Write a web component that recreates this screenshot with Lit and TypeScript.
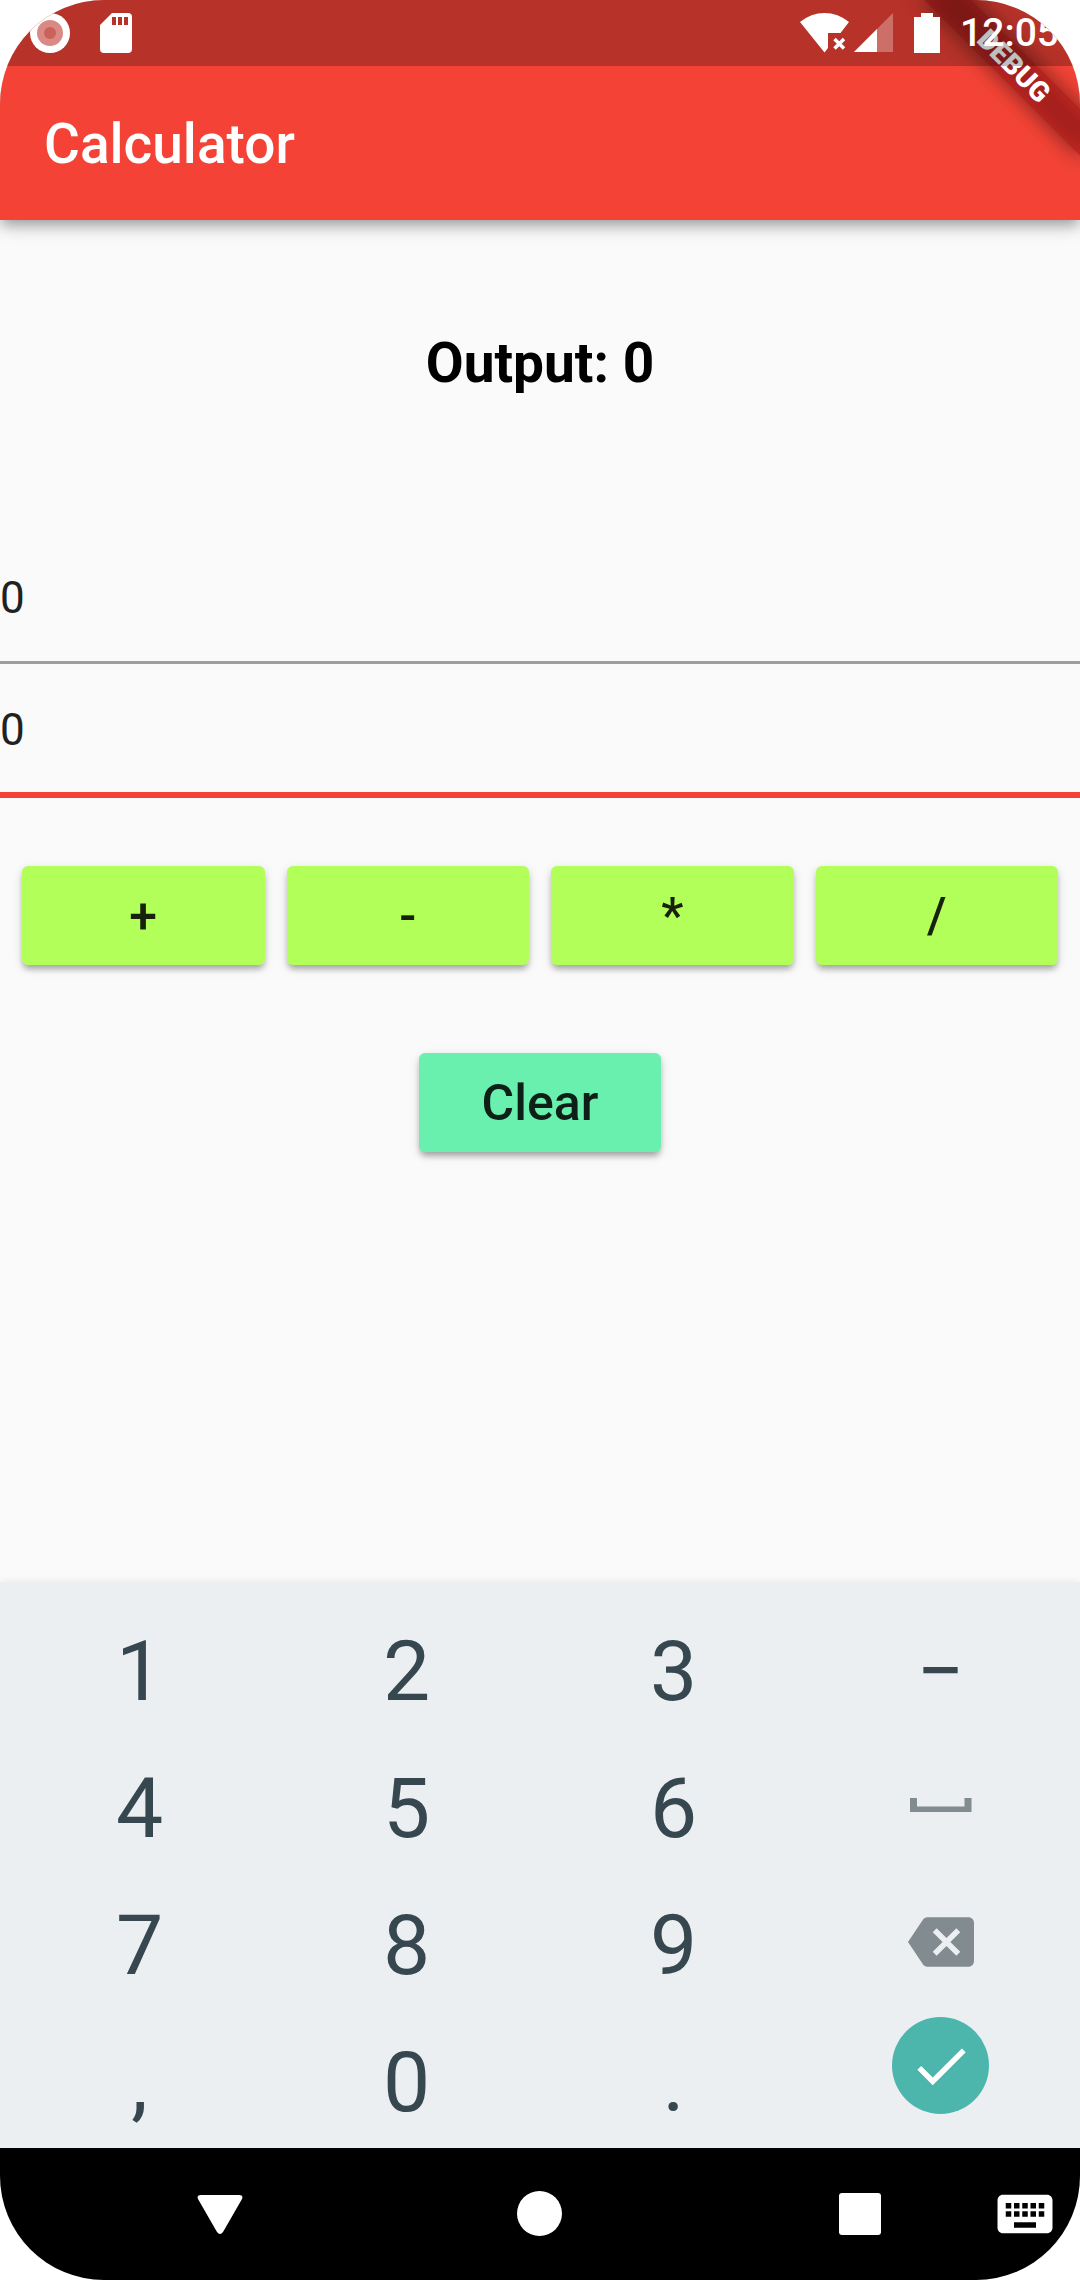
import { LitElement, html, css } from "lit";
import { classMap } from "lit/directives/class-map.js";

type Field = "first" | "second";

const DIGIT_ROWS = [
  ["1", "2", "3"],
  ["4", "5", "6"],
  ["7", "8", "9"],
  [",", "0", "."],
];

const OPERATORS = ["+", "-", "*", "/"];

class StatusBar extends LitElement {
  static styles = css`
    :host {
      display: block;
    }
    .bar {
      display: flex;
      align-items: center;
      justify-content: space-between;
      height: 66px;
      padding: 0 21px 0 30px;
      box-sizing: border-box;
      background: rgba(0, 0, 0, 0.25);
      color: #fff;
    }
    .notices {
      display: flex;
      gap: 30px;
    }
    .system {
      display: flex;
      align-items: center;
      gap: 20px;
    }
    .radios {
      display: flex;
      gap: 5px;
    }
    .clock {
      font-size: 39px;
      font-weight: 500;
      line-height: 66px;
    }
    svg {
      display: block;
      fill: #fff;
    }
  `;

  render() {
    return html`
      <div class="bar">
        <div class="notices">
          <svg width="40" height="40" viewBox="0 0 40 40" aria-hidden="true">
            <circle cx="20" cy="20" r="20" />
            <circle cx="20" cy="20" r="13" fill="#d98a84" />
            <circle cx="20" cy="20" r="6" fill="#cb6259" />
          </svg>
          <svg width="32" height="40" viewBox="0 0 32 40" aria-hidden="true">
            <path
              fill-rule="evenodd"
              d="M12 0H28Q32 0 32 4V36Q32 40 28 40H4Q0 40 0 36V12ZM12 4V12H16V4ZM18 4V12H22V4ZM24 4V12H28V4Z"
            />
          </svg>
        </div>
        <div class="system">
          <div class="radios">
            <svg width="49" height="40" viewBox="0 0 49 40" aria-hidden="true">
              <path d="M0 9Q11 0 24.500 0T49 9L40.500 20H28V35L24.500 39.500Z" />
              <path d="M34.500 26L44 35.500M44 26L34.500 35.500" stroke="#fff" stroke-width="3.500" />
            </svg>
            <svg width="39" height="40" viewBox="0 0 39 40" aria-hidden="true">
              <path d="M39 0V39H0Z" opacity="0.3" />
              <path d="M23 16V39H0Z" />
            </svg>
          </div>
          <svg width="27" height="40" viewBox="0 0 27 40" aria-hidden="true">
            <path d="M8 0H20V4H27V40H1V4H8Z" />
          </svg>
          <span class="clock">12:05</span>
        </div>
      </div>
    `;
  }
}
customElements.define("status-bar", StatusBar);

class NavBar extends LitElement {
  static styles = css`
    :host {
      display: block;
    }
    .bar {
      display: flex;
      align-items: center;
      height: 132px;
      padding: 0 11px 0 176px;
      box-sizing: border-box;
      background: #000;
    }
    .main {
      display: flex;
      flex: 1;
      justify-content: space-between;
      margin-right: 77px;
    }
    button {
      display: grid;
      place-items: center;
      width: 88px;
      height: 88px;
      padding: 0;
      border: 0;
      background: none;
    }
    svg {
      display: block;
      fill: #fff;
    }
  `;

  render() {
    return html`
      <nav class="bar">
        <div class="main">
          <button aria-label="Back">
            <svg width="46" height="46" viewBox="0 0 46 46">
              <path d="M4 4H42Q46.500 4 45 8L26 41Q23 45 20 41L1 8Q-.5 4 4 4Z" />
            </svg>
          </button>
          <button aria-label="Home">
            <svg width="46" height="46" viewBox="0 0 46 46">
              <circle cx="22.500" cy="22.500" r="22.500" />
            </svg>
          </button>
          <button aria-label="Recent apps">
            <svg width="46" height="46" viewBox="0 0 46 46">
              <rect x="2" y="2" width="42" height="42" rx="3" />
            </svg>
          </button>
        </div>
        <button aria-label="Switch keyboard">
          <svg width="66" height="66" viewBox="0 0 24 24">
            <path
              d="M20 5H4c-1.100 0-1.990.9-1.990 2L2 17c0 1.100.9 2 2 2h16c1.100 0 2-.9 2-2V7c0-1.100-.9-2-2-2zm-9 3h2v2h-2V8zm0 3h2v2h-2v-2zM8 8h2v2H8V8zm0 3h2v2H8v-2zm-1 2H5v-2h2v2zm0-3H5V8h2v2zm9 7H8v-2h8v2zm0-4h-2v-2h2v2zm0-3h-2V8h2v2zm3 3h-2v-2h2v2zm0-3h-2V8h2v2z"
            />
          </svg>
        </button>
      </nav>
    `;
  }
}
customElements.define("nav-bar", NavBar);

class NumberPad extends LitElement {
  static styles = css`
    :host {
      display: block;
    }
    .pad {
      display: grid;
      grid-template-columns: repeat(4, 1fr);
      grid-auto-rows: 131px;
      row-gap: 6px;
      padding: 24px 6px 0;
      background: #ebeff2;
      box-shadow: 0 0 8px rgba(0, 0, 0, 0.08);
    }
    .key {
      display: flex;
      align-items: center;
      justify-content: center;
      padding: 0;
      border: 0;
      background: none;
      color: #37474f;
      font: 400 84px/99px Roboto, "Liberation Sans", sans-serif;
    }
    .symbol {
      padding-bottom: 8px;
    }
    .enter {
      align-items: flex-start;
    }
    .disc {
      display: grid;
      place-items: center;
      width: 97px;
      height: 97px;
      border-radius: 50%;
      background: #4db6ac;
    }
    svg {
      display: block;
      fill: #828c90;
    }
    .disc svg {
      fill: #fff;
    }
  `;

  private press(key: string) {
    this.dispatchEvent(new CustomEvent("key", { detail: key }));
  }

  private action(row: number) {
    switch (row) {
      case 0:
        return html`<button class="key" @click=${() => this.press("-")}>−</button>`;
      case 1:
        return html`<button class="key symbol" aria-label="Space">
          <svg width="66" height="66" viewBox="0 0 66 66">
            <path d="M2 26H9V34.500H56.500V26H63.500V40H2Z" />
          </svg>
        </button>`;
      case 2:
        return html`<button class="key symbol" aria-label="Delete" @click=${() => this.press("delete")}>
          <svg width="66" height="66" viewBox="0 0 24 24">
            <path
              d="M22 3H7c-.69 0-1.230.35-1.590.88L0 12l5.410 8.110c.36.53.9.89 1.590.89h15c1.100 0 2-.9 2-2V5c0-1.100-.9-2-2-2zm-3 12.590L17.590 17 14 13.410 10.410 17 9 15.590 12.590 12 9 8.410 10.410 7 14 10.590 17.590 7 19 8.410 15.410 12 19 15.590z"
            />
          </svg>
        </button>`;
      default:
        return html`<button class="key enter" aria-label="Done">
          <span class="disc">
            <svg width="66" height="66" viewBox="0 0 24 24">
              <path d="M9 16.200L4.800 12l-1.400 1.400L9 19 21 7l-1.400-1.400L9 16.200z" />
            </svg>
          </span>
        </button>`;
    }
  }

  render() {
    return html`
      <div class="pad">
        ${DIGIT_ROWS.map(
          (row, i) => html`
            ${row.map((k) => html`<button class="key" @click=${() => this.press(k)}>${k}</button>`)}
            ${this.action(i)}
          `
        )}
      </div>
    `;
  }
}
customElements.define("number-pad", NumberPad);

class AppRoot extends LitElement {
  static properties = {
    first: { state: true },
    second: { state: true },
    output: { state: true },
    active: { state: true },
  };

  declare first: string;
  declare second: string;
  declare output: number;
  declare active: Field;

  constructor() {
    super();
    this.first = "0";
    this.second = "0";
    this.output = 0;
    this.active = "second";
  }

  static styles = css`
    :host {
      display: block;
      font-family: Roboto, "Liberation Sans", sans-serif;
      background: #fff;
    }
    .screen {
      display: flex;
      flex-direction: column;
      min-height: 100vh;
      border-radius: 104px;
      overflow: hidden;
      background: #fafafa;
    }
    .header {
      position: relative;
      z-index: 1;
      background: #f44336;
      box-shadow: 0 6px 11px -3px rgba(0, 0, 0, 0.22), 0 8px 14px rgba(0, 0, 0, 0.14),
        0 3px 24px rgba(0, 0, 0, 0.1);
    }
    .status {
      position: relative;
      z-index: 2;
    }
    .title {
      margin: 0;
      padding: 46px 44px 44px;
      color: #fff;
      font-size: 55px;
      font-weight: 500;
      line-height: 64px;
    }
    .corner {
      position: absolute;
      inset: 0;
      z-index: 1;
      overflow: hidden;
      pointer-events: none;
    }
    .ribbon {
      position: absolute;
      top: 77px;
      right: -110px;
      width: 220px;
      height: 33px;
      transform: rotate(45deg);
      transform-origin: 50% -77px;
      color: #fff;
      font-size: 28px;
      font-weight: 900;
      line-height: 33px;
      text-align: center;
    }
    .ribbon::before,
    .ribbon::after {
      content: "";
      position: absolute;
      inset: 0;
      z-index: -1;
    }
    .ribbon::before {
      background: rgba(0, 0, 0, 0.5);
      filter: blur(11px);
    }
    .ribbon::after {
      background: rgba(183, 28, 28, 0.63);
    }
    .content {
      flex: 1;
      display: flex;
      flex-direction: column;
      padding-top: 111px;
    }
    .output {
      display: block;
      margin-bottom: 137px;
      color: #000;
      font-size: 55px;
      font-weight: 700;
      line-height: 64px;
      text-align: center;
    }
    .field {
      display: block;
      width: 100%;
      height: auto;
      box-sizing: border-box;
      margin: 0;
      padding: 40px 0 36px;
      border: 0;
      border-bottom: 3px solid #9e9e9e;
      border-radius: 0;
      outline: 0;
      background: none;
      color: #212121;
      font: 400 44px/53px Roboto, "Liberation Sans", sans-serif;
    }
    .field.active {
      padding-bottom: 35px;
      border-bottom: 6px solid #f44336;
    }
    .operators {
      display: grid;
      grid-template-columns: repeat(4, 1fr);
      gap: 22px;
      margin: 68px 22px 88px;
    }
    .button {
      height: 99px;
      padding: 0;
      border: 0;
      border-radius: 6px;
      background: #b2ff59;
      box-shadow: 0 6px 6px -3px rgba(0, 0, 0, 0.2), 0 4px 6px rgba(0, 0, 0, 0.14),
        0 3px 12px rgba(0, 0, 0, 0.1);
      color: rgba(0, 0, 0, 0.87);
      font: 500 50px/58px Roboto, "Liberation Sans", sans-serif;
    }
    .clear {
      align-self: center;
      width: 242px;
      background: #69f0ae;
    }
  `;

  private type(key: string) {
    const current = this[this.active];
    if (key === "delete") {
      this[this.active] = current.length > 1 ? current.slice(0, -1) : "0";
    } else {
      this[this.active] = current === "0" && key !== "." ? key : current + key;
    }
  }

  private calculate(op: string) {
    const a = Number(this.first);
    const b = Number(this.second);
    this.output = op === "+" ? a + b : op === "-" ? a - b : op === "*" ? a * b : a / b;
  }

  private clear() {
    this.first = "0";
    this.second = "0";
    this.output = 0;
  }

  private field(name: Field, label: string) {
    return html`<input
      class=${classMap({ field: true, active: this.active === name })}
      aria-label=${label}
      inputmode="numeric"
      .value=${this[name]}
      @focus=${() => (this.active = name)}
      @input=${(e: Event) => (this[name] = (e.target as HTMLInputElement).value)}
    />`;
  }

  render() {
    return html`
      <div class="screen">
        <header class="header">
          <status-bar class="status"></status-bar>
          <h1 class="title">Calculator</h1>
          <div class="corner"><div class="ribbon">DEBUG</div></div>
        </header>
        <main class="content">
          <output class="output">Output: ${this.output}</output>
          ${this.field("first", "First number")} ${this.field("second", "Second number")}
          <div class="operators">
            ${OPERATORS.map(
              (op) => html`<button class="button" @click=${() => this.calculate(op)}>${op}</button>`
            )}
          </div>
          <button class="button clear" @click=${this.clear}>Clear</button>
        </main>
        <number-pad @key=${(e: CustomEvent<string>) => this.type(e.detail)}></number-pad>
        <nav-bar></nav-bar>
      </div>
    `;
  }
}
customElements.define("app-root", AppRoot);
